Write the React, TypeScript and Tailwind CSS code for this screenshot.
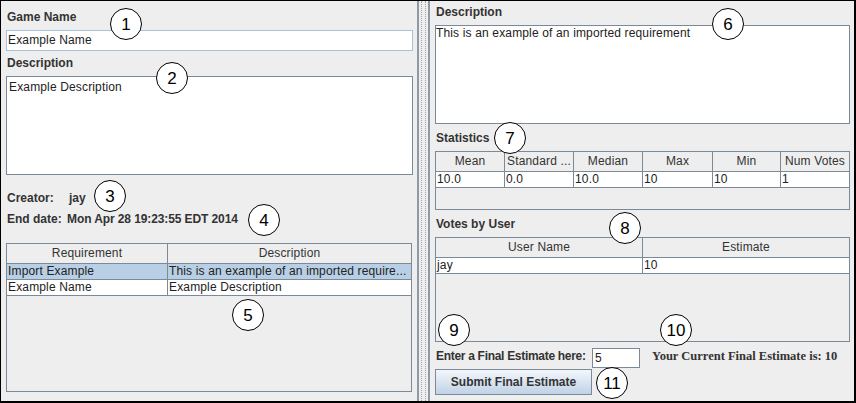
import type { ReactNode } from "react";

const line = "border-[#7a8a99]";

function Label({ children, className = "" }: { children: ReactNode; className?: string }) {
  return (
    <div className={`pl-[1px] font-bold leading-[14px] text-[#333333] ${className}`}>
      {children}
    </div>
  );
}

function Marker({ n, pos }: { n: number; pos: string }) {
  return (
    <div
      className={`absolute ${pos} flex h-[32px] w-[32px] items-center justify-center rounded-full border border-black bg-white text-[17px] leading-none text-black`}
    >
      {n}
    </div>
  );
}

function LeftPanel() {
  return (
    <div className="flex w-[416px] flex-col pt-[9px] pl-[5px] pr-[4px]">
      <Label>Game Name</Label>
      <div className="mt-[6px] h-[21px] border border-[#a8c2dc] bg-white pl-[1px] leading-[19px] tracking-[0.15px] text-[#222222]">
        Example Name
      </div>
      <Label className="mt-[5px]">Description</Label>
      <div className={`mt-[6px] h-[99px] border ${line} bg-white pt-[3px] pl-[2px] leading-[14px] tracking-[0.15px] text-[#222222]`}>
        Example Description
      </div>
      <div className="mt-[16px] flex font-bold leading-[14px] text-[#333333]">
        <span className="w-[63px] pl-[1px]">Creator:</span>
        <span>jay</span>
      </div>
      <div className="mt-[7px] flex font-bold leading-[14px] text-[#333333]">
        <span className="w-[61px] pl-[1px]">End date:</span>
        <span className="tracking-[-0.1px]">Mon Apr 28 19:23:55 EDT 2014</span>
      </div>
      <div className={`mt-[17px] mr-[1px] h-[149px] border ${line} bg-[#eeeeee] tracking-[0.15px]`}>
        <div className={`flex h-[20px] border-b ${line} text-[#333333]`}>
          <div className={`w-[161px] border-r ${line} text-center leading-[19px]`}>Requirement</div>
          <div className="flex-1 text-center leading-[19px]">Description</div>
        </div>
        <div className={`flex h-[16px] border-b ${line} bg-[#b8cfe5] text-[#222222]`}>
          <div className={`w-[161px] border-r ${line} pl-[1px] leading-[15px]`}>Import Example</div>
          <div className="flex-1 overflow-hidden whitespace-nowrap pl-[1px] leading-[15px]">
            This is an example of an imported require...
          </div>
        </div>
        <div className={`flex h-[16px] border-b ${line} bg-white text-[#222222]`}>
          <div className={`w-[161px] border-r ${line} pl-[1px] leading-[15px]`}>Example Name</div>
          <div className="flex-1 pl-[1px] leading-[15px]">Example Description</div>
        </div>
      </div>
    </div>
  );
}

function Splitter() {
  return (
    <div className="flex">
      <div className="w-[2px] bg-[#8f9aa6]" />
      <div className="flex w-[9px] justify-center">
        <div className="w-[5px] border-x border-dotted border-[#a0a4a8]" />
      </div>
      <div className="w-[2px] bg-[#8f9aa6]" />
    </div>
  );
}

const stats = [
  { head: "Mean", val: "10.0", w: "w-[69px]" },
  { head: "Standard ...", val: "0.0", w: "w-[69px]" },
  { head: "Median", val: "10.0", w: "w-[69px]" },
  { head: "Max", val: "10", w: "w-[70px]" },
  { head: "Min", val: "10", w: "w-[68px]" },
];

function RightPanel() {
  return (
    <div className="flex flex-1 flex-col pt-[4px] pl-[5px] pr-[4px]">
      <Label>Description</Label>
      <div className={`mt-[6px] h-[99px] border ${line} bg-white leading-[14px] tracking-[0.15px] text-[#222222]`}>
        This is an example of an imported requirement
      </div>

      <Label className="mt-[7px]">Statistics</Label>
      <div className={`mt-[6px] h-[59px] border ${line} bg-[#eeeeee] tracking-[0.15px]`}>
        <div className={`flex h-[20px] border-b ${line} text-[#333333]`}>
          {stats.map((s) => (
            <div key={s.head} className={`${s.w} border-r ${line} whitespace-nowrap text-center leading-[19px]`}>
              {s.head}
            </div>
          ))}
          <div className="flex-1 whitespace-nowrap text-center leading-[19px]">Num Votes</div>
        </div>
        <div className={`flex h-[16px] border-b ${line} bg-white text-[#222222]`}>
          {stats.map((s) => (
            <div key={s.head} className={`${s.w} border-r ${line} pl-[1px] leading-[15px]`}>
              {s.val}
            </div>
          ))}
          <div className="flex-1 pl-[1px] leading-[15px]">1</div>
        </div>
      </div>

      <Label className="mt-[7px]">Votes by User</Label>
      <div className={`mt-[6px] h-[105px] border ${line} bg-[#eeeeee] tracking-[0.15px]`}>
        <div className={`flex h-[20px] border-b ${line} text-[#333333]`}>
          <div className={`w-[207px] border-r ${line} text-center leading-[19px]`}>User Name</div>
          <div className="flex-1 text-center leading-[19px]">Estimate</div>
        </div>
        <div className={`flex h-[16px] border-b ${line} bg-white text-[#222222]`}>
          <div className={`w-[207px] border-r ${line} pl-[1px] leading-[15px]`}>jay</div>
          <div className="flex-1 pl-[1px] leading-[15px]">10</div>
        </div>
      </div>

      <div className="mt-[6px] flex items-start">
        <div className="mt-[1px] w-[157px] whitespace-nowrap pl-[1px] font-bold leading-[14px] tracking-[-0.3px] text-[#333333]">
          Enter a Final Estimate here:
        </div>
        <div className={`h-[20px] w-[48px] border ${line} bg-white pl-[2px] leading-[19px] text-[#222222]`}>
          5
        </div>
        <div className="mt-[1px] ml-[12px] whitespace-nowrap font-['Liberation_Serif','Times_New_Roman',serif] text-[12.5px] font-bold leading-[14px] text-[#333333]">
          Your Current Final Estimate is: 10
        </div>
      </div>

      <button
        type="button"
        className={`mt-[1px] h-[26px] w-[157px] border ${line} bg-gradient-to-b from-[#f4f7fb] to-[#bfd2e6] font-bold leading-[24px] text-[#333333]`}
      >
        Submit Final Estimate
      </button>
    </div>
  );
}

export default function App() {
  return (
    <div className="h-[403px] w-[856px] border-t border-l border-r-2 border-b-2 border-black bg-[#eeeeee] font-['Liberation_Sans',Arial,sans-serif] text-[12px]">
      <div className="relative flex h-full">
        <LeftPanel />
        <Splitter />
        <RightPanel />

        <Marker n={1} pos="left-[109px] top-[7px]" />
        <Marker n={2} pos="left-[155px] top-[61px]" />
        <Marker n={3} pos="left-[93px] top-[179px]" />
        <Marker n={4} pos="left-[247px] top-[203px]" />
        <Marker n={5} pos="left-[231px] top-[298px]" />
        <Marker n={6} pos="left-[711px] top-[7px]" />
        <Marker n={7} pos="left-[493px] top-[121px]" />
        <Marker n={8} pos="left-[608px] top-[211px]" />
        <Marker n={9} pos="left-[437px] top-[313px]" />
        <Marker n={10} pos="left-[659px] top-[313px]" />
        <Marker n={11} pos="left-[595px] top-[366px]" />
      </div>
    </div>
  );
}
